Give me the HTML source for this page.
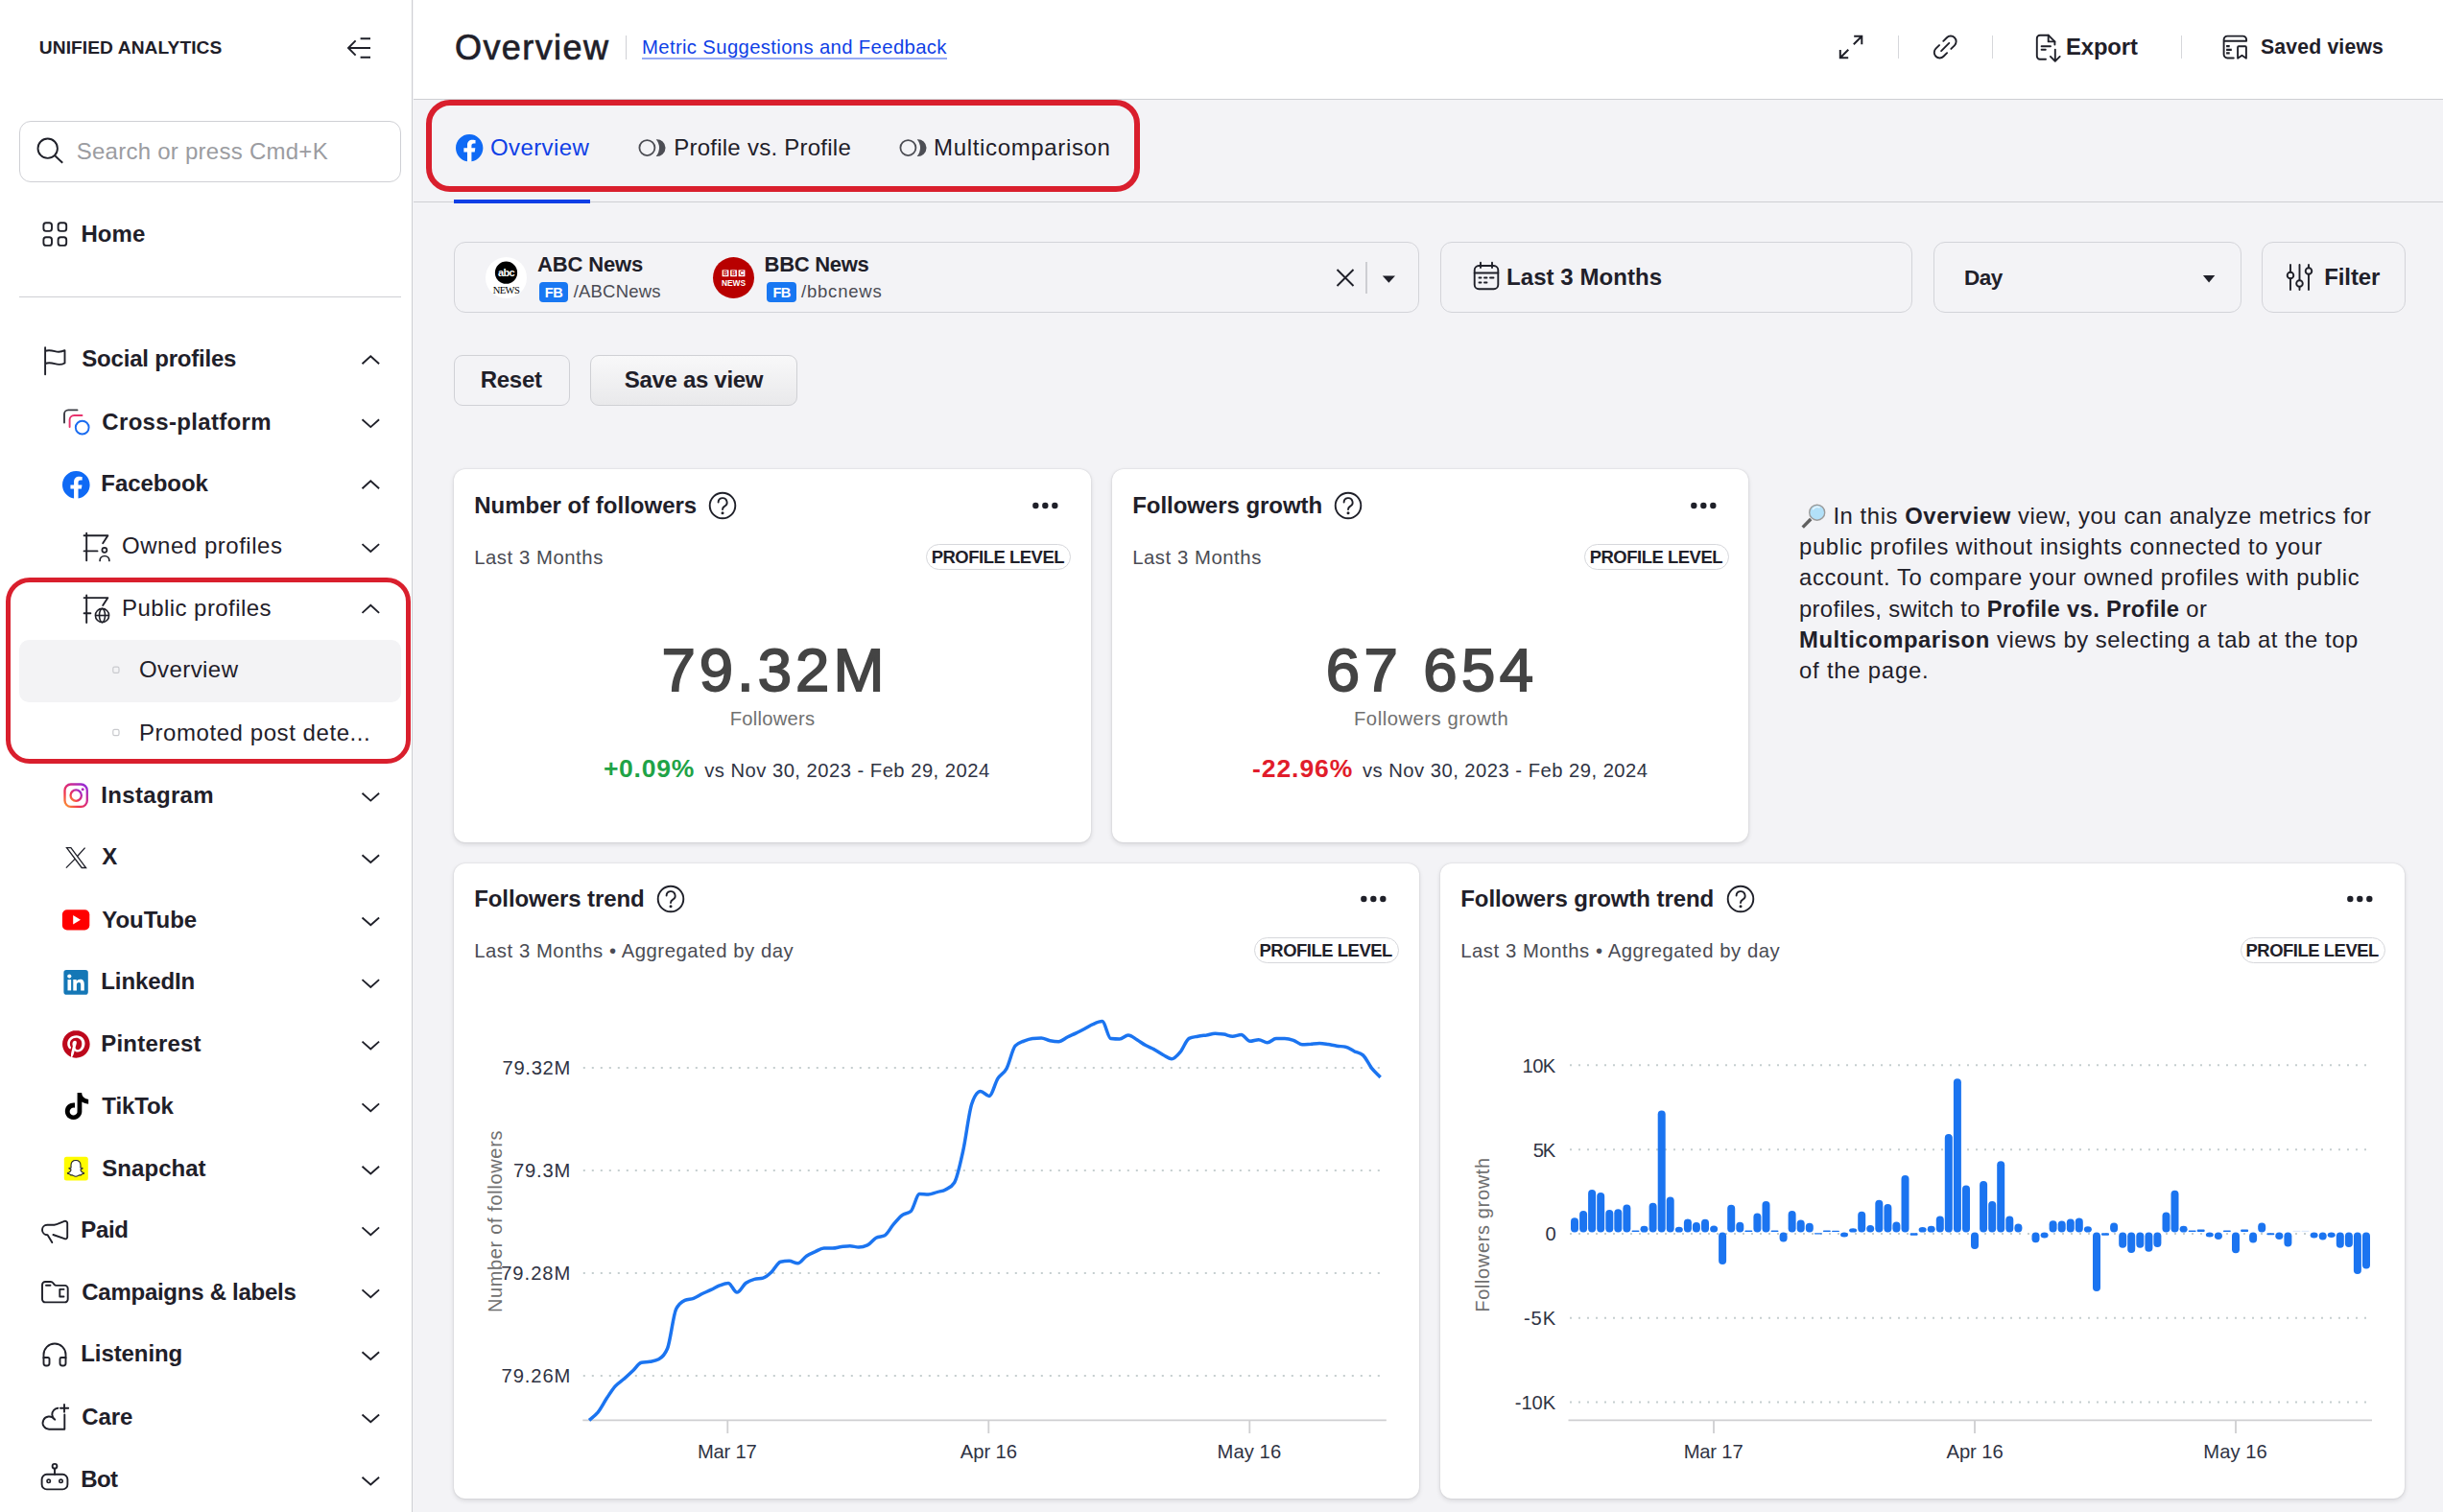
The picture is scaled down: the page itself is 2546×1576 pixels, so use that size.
<!DOCTYPE html>
<html lang="en">
<head>
<meta charset="utf-8">
<title>Unified Analytics – Overview</title>
<style>
html,body{margin:0;padding:0}
body{width:2546px;height:1576px;overflow:hidden;position:relative;background:#f3f3f6;font-family:"Liberation Sans",Arial,sans-serif;color:#1f2029}
.a{position:absolute;box-sizing:border-box}
.t{position:absolute;white-space:nowrap;line-height:1;margin:0;font-weight:400}
.t b{font-weight:700}
svg{overflow:visible}
.card{background:#fff;border-radius:12px;box-shadow:0 2px 5px rgba(20,22,30,.13),0 0 2px rgba(20,22,30,.14)}
.badge{border:1.5px solid #d6d7db;border-radius:14px;background:#fff}
.fld{border:1.5px solid #d3d4d9;border-radius:12px}
</style>
</head>
<body>
<nav>
<div class="a " style="left:0px;top:0px;width:430.2px;height:1576px;background:#fff;border-right:1.6px solid #cecfd3"></div>
<span class="t" style="left:40.8px;top:40.0px;font-size:19.2px;letter-spacing:0.07px;font-weight:700;">UNIFIED ANALYTICS</span>
<svg class="a" style="left:360px;top:36px" width="28" height="28" viewBox="360 36 28 28" ><path d="M386 40.2H375.6M386 50H363.4M386 59.8H375.6M370.6 42.4L363 50l7.6 7.6" fill="none" stroke="#1f2029" stroke-width="1.9"/></svg>
<div class="a " style="left:20px;top:126px;width:398px;height:63.5px;border:1.5px solid #cfd0d5;border-radius:12px;background:#fff"></div>
<svg class="a" style="left:36px;top:140px" width="34" height="34" viewBox="36 140 34 34" ><circle cx="49.7" cy="154.7" r="10.2" fill="none" stroke="#1f2029" stroke-width="1.9"/><path d="M57.2 162.2L65.2 169.8" stroke="#1f2029" stroke-width="1.9" fill="none"/></svg>
<span class="t" style="left:79.7px;top:146.0px;font-size:24px;letter-spacing:0.26px;color:#9b9ca1;">Search or press Cmd+K</span>
<svg class="a" style="left:42px;top:229px" width="30" height="30" viewBox="42 229 30 30" ><g fill="none" stroke="#1f2029" stroke-width="1.9"><rect x="45.4" y="232.3" width="8.6" height="8.6" rx="2.6"/><rect x="60.6" y="232.3" width="8.6" height="8.6" rx="2.6"/><rect x="45.4" y="247.3" width="8.6" height="8.6" rx="2.6"/><rect x="60.6" y="247.3" width="8.6" height="8.6" rx="2.6"/></g></svg>
<span class="t" style="left:84.4px;top:232.0px;font-size:24px;letter-spacing:0.09px;font-weight:700;">Home</span>
<div class="a " style="left:20px;top:308.6px;width:398px;height:1.8px;background:#cfd0d4"></div>
<div class="a " style="left:20px;top:667.4px;width:398px;height:64.5px;background:#f3f3f5;border-radius:10px"></div>
<span class="t" style="left:85.3px;top:362.0px;font-size:24px;letter-spacing:-0.21px;font-weight:700;">Social profiles</span>
<svg class="a" style="left:0;top:0" width="430" height="1576"><path d="M377.5 379.2L386.3 371.2L395.1 379.2" fill="none" stroke="#1f2029" stroke-width="1.9"/></svg>
<span class="t" style="left:106.3px;top:428.0px;font-size:24px;letter-spacing:0.33px;font-weight:700;">Cross-platform</span>
<svg class="a" style="left:0;top:0" width="430" height="1576"><path d="M377.5 437.3L386.3 445.1L395.1 437.3" fill="none" stroke="#1f2029" stroke-width="1.9"/></svg>
<span class="t" style="left:105.3px;top:492.0px;font-size:24px;letter-spacing:-0.07px;font-weight:700;">Facebook</span>
<svg class="a" style="left:0;top:0" width="430" height="1576"><path d="M377.5 509.3L386.3 501.3L395.1 509.3" fill="none" stroke="#1f2029" stroke-width="1.9"/></svg>
<span class="t" style="left:127.0px;top:557.0px;font-size:24px;letter-spacing:0.53px;">Owned profiles</span>
<svg class="a" style="left:0;top:0" width="430" height="1576"><path d="M377.5 567.1L386.3 574.9L395.1 567.1" fill="none" stroke="#1f2029" stroke-width="1.9"/></svg>
<span class="t" style="left:127.0px;top:622.0px;font-size:24px;letter-spacing:0.44px;">Public profiles</span>
<svg class="a" style="left:0;top:0" width="430" height="1576"><path d="M377.5 638.9L386.3 630.9L395.1 638.9" fill="none" stroke="#1f2029" stroke-width="1.9"/></svg>
<span class="t" style="left:145.0px;top:686.0px;font-size:24px;letter-spacing:0.42px;">Overview</span>
<span class="t" style="left:145.0px;top:752.0px;font-size:24px;letter-spacing:0.56px;">Promoted post dete...</span>
<span class="t" style="left:105.3px;top:817.0px;font-size:24px;letter-spacing:0.33px;font-weight:700;">Instagram</span>
<svg class="a" style="left:0;top:0" width="430" height="1576"><path d="M377.5 826.8L386.3 834.6L395.1 826.8" fill="none" stroke="#1f2029" stroke-width="1.9"/></svg>
<span class="t" style="left:106.3px;top:881.0px;font-size:24px;letter-spacing:-0.10px;font-weight:700;">X</span>
<svg class="a" style="left:0;top:0" width="430" height="1576"><path d="M377.5 891.2L386.3 899.0L395.1 891.2" fill="none" stroke="#1f2029" stroke-width="1.9"/></svg>
<span class="t" style="left:106.3px;top:947.0px;font-size:24px;letter-spacing:-0.04px;font-weight:700;">YouTube</span>
<svg class="a" style="left:0;top:0" width="430" height="1576"><path d="M377.5 956.5L386.3 964.3L395.1 956.5" fill="none" stroke="#1f2029" stroke-width="1.9"/></svg>
<span class="t" style="left:105.3px;top:1011.0px;font-size:24px;letter-spacing:-0.12px;font-weight:700;">LinkedIn</span>
<svg class="a" style="left:0;top:0" width="430" height="1576"><path d="M377.5 1021.1L386.3 1028.9L395.1 1021.1" fill="none" stroke="#1f2029" stroke-width="1.9"/></svg>
<span class="t" style="left:105.3px;top:1076.0px;font-size:24px;letter-spacing:0.19px;font-weight:700;">Pinterest</span>
<svg class="a" style="left:0;top:0" width="430" height="1576"><path d="M377.5 1085.6L386.3 1093.4L395.1 1085.6" fill="none" stroke="#1f2029" stroke-width="1.9"/></svg>
<span class="t" style="left:106.3px;top:1141.0px;font-size:24px;letter-spacing:-0.10px;font-weight:700;">TikTok</span>
<svg class="a" style="left:0;top:0" width="430" height="1576"><path d="M377.5 1150.4L386.3 1158.2L395.1 1150.4" fill="none" stroke="#1f2029" stroke-width="1.9"/></svg>
<span class="t" style="left:106.3px;top:1206.0px;font-size:24px;letter-spacing:0.04px;font-weight:700;">Snapchat</span>
<svg class="a" style="left:0;top:0" width="430" height="1576"><path d="M377.5 1215.7L386.3 1223.5L395.1 1215.7" fill="none" stroke="#1f2029" stroke-width="1.9"/></svg>
<span class="t" style="left:84.3px;top:1270.0px;font-size:24px;letter-spacing:-0.34px;font-weight:700;">Paid</span>
<svg class="a" style="left:0;top:0" width="430" height="1576"><path d="M377.5 1279.4L386.3 1287.2L395.1 1279.4" fill="none" stroke="#1f2029" stroke-width="1.9"/></svg>
<span class="t" style="left:85.3px;top:1335.0px;font-size:24px;letter-spacing:-0.27px;font-weight:700;">Campaigns &amp; labels</span>
<svg class="a" style="left:0;top:0" width="430" height="1576"><path d="M377.5 1344.4L386.3 1352.2L395.1 1344.4" fill="none" stroke="#1f2029" stroke-width="1.9"/></svg>
<span class="t" style="left:84.3px;top:1399.0px;font-size:24px;letter-spacing:-0.09px;font-weight:700;">Listening</span>
<svg class="a" style="left:0;top:0" width="430" height="1576"><path d="M377.5 1409.2L386.3 1417.0L395.1 1409.2" fill="none" stroke="#1f2029" stroke-width="1.9"/></svg>
<span class="t" style="left:85.3px;top:1465.0px;font-size:24px;letter-spacing:-0.07px;font-weight:700;">Care</span>
<svg class="a" style="left:0;top:0" width="430" height="1576"><path d="M377.5 1474.5L386.3 1482.3L395.1 1474.5" fill="none" stroke="#1f2029" stroke-width="1.9"/></svg>
<span class="t" style="left:84.3px;top:1530.0px;font-size:24px;letter-spacing:-0.65px;font-weight:700;">Bot</span>
<svg class="a" style="left:0;top:0" width="430" height="1576"><path d="M377.5 1539.7L386.3 1547.5L395.1 1539.7" fill="none" stroke="#1f2029" stroke-width="1.9"/></svg>
<svg class="a" style="left:0;top:0" width="430" height="1576" viewBox="0 0 430 1576"><path fill="none" stroke="#1f2029" stroke-width="1.9" stroke-linecap="round" stroke-linejoin="round" d="M47.100 362.2V390.3M47.100 365.9c3.400-1.300 6.500-.700 10 .300s7 .800 10.400-1v13.300c-3.400 1.800-6.900 1.700-10.400.700s-6.600-1.500-10-.200"/></svg>
<svg class="a" style="left:0;top:0" width="430" height="1576" viewBox="0 0 430 1576"><path d="M67 440.6V431.6a4.200 4.200 0 0 1 4.200-4.200H80.500" fill="none" stroke="#3b3c44" stroke-width="1.9" stroke-linecap="round"/><path d="M72.600 445.1V437.6a4.600 4.600 0 0 1 4.600-4.600H85.500" fill="none" stroke="#e8336d" stroke-width="1.9" stroke-linecap="round"/><circle cx="85.700" cy="445.6" r="6.900" fill="none" stroke="#1a6cf0" stroke-width="1.9"/></svg>
<svg class="a" style="left:65.1px;top:490.6px" width="28.6" height="28.6" viewBox="0 0 24 24" ><circle cx="12" cy="12" r="11.5" fill="#fff"/><path d="M24 12.073c0-6.627-5.373-12-12-12s-12 5.373-12 12c0 5.99 4.388 10.954 10.125 11.854v-8.385H7.078v-3.47h3.047V9.43c0-3.007 1.792-4.669 4.533-4.669 1.312 0 2.686.235 2.686.235v2.953H15.83c-1.491 0-1.956.925-1.956 1.874v2.25h3.328l-.532 3.47h-2.796v8.385C19.612 23.027 24 18.062 24 12.073z" fill="#0f6af5"/></svg>
<svg class="a" style="left:0;top:0" width="430" height="1576" viewBox="0 0 430 1576"><path fill="none" stroke="#1f2029" stroke-width="1.9" stroke-linecap="round" stroke-linejoin="round" d="M90.200 555.7V584.3M87.600 558.3H112.400L107.200 566.2M87.600 574.4H101.500"/><circle cx="108.900" cy="573.3" r="2.500" fill="none" stroke="#1f2029" stroke-width="1.700"/><path d="M104.100 584.4a4.900 4.900 0 0 1 9.800 0" fill="none" stroke="#1f2029" stroke-width="1.700" stroke-linecap="round"/></svg>
<svg class="a" style="left:0;top:0" width="430" height="1576" viewBox="0 0 430 1576"><path fill="none" stroke="#1f2029" stroke-width="1.9" stroke-linecap="round" stroke-linejoin="round" d="M90.200 620.5V649.1M87.600 623.1H112.400L107.200 631.0M87.600 639.2H94.400"/><g fill="none" stroke="#1f2029" stroke-width="1.600"><circle cx="106.500" cy="641.5" r="7.100"/><ellipse cx="106.500" cy="641.5" rx="3" ry="7.100"/><path d="M99.400 641.5H113.600"/></g></svg>
<svg class="a" style="left:0;top:0" width="430" height="1576" viewBox="0 0 430 1576"><rect x="117.800" y="695.2" width="6.200" height="6.200" rx="1.600" fill="none" stroke="#c9cace" stroke-width="1.200"/></svg>
<svg class="a" style="left:0;top:0" width="430" height="1576" viewBox="0 0 430 1576"><rect x="117.800" y="760.4" width="6.200" height="6.200" rx="1.600" fill="none" stroke="#c9cace" stroke-width="1.200"/></svg>
<svg class="a" style="left:0;top:0" width="430" height="1576" viewBox="0 0 430 1576"><defs><linearGradient id="ig" x1="0" y1="1" x2="1" y2="0"><stop offset="0" stop-color="#fd9a2e"/><stop offset=".3" stop-color="#f0364f"/><stop offset=".6" stop-color="#d22a8a"/><stop offset="1" stop-color="#8a2be2"/></linearGradient></defs><g fill="none" stroke="url(#ig)" stroke-width="2.300"><rect x="67.500" y="817.5" width="23.300" height="23.300" rx="6.300"/><circle cx="79.200" cy="829.1" r="5.700"/></g><circle cx="86.200" cy="822.7" r="1.500" fill="#b52ac0"/></svg>
<svg class="a" style="left:0;top:0" width="430" height="1576" viewBox="0 0 430 1576"><g fill="none" stroke="#1f2029" stroke-width="1.300" stroke-linejoin="miter"><path d="M69.500 883.7H73.900L89.600 904.5H85.200Z"/><path d="M88.600 883.6L80.400 892.7M78 895.4L68.900 904.6"/></g></svg>
<svg class="a" style="left:0;top:0" width="430" height="1576" viewBox="0 0 430 1576"><rect x="64.900" y="948.3" width="28.400" height="21.100" rx="5" fill="#ff0000"/><path d="M76.200 954.0L84 958.8L76.200 963.6Z" fill="#fff"/></svg>
<svg class="a" style="left:0;top:0" width="430" height="1576" viewBox="0 0 430 1576"><rect x="66.400" y="1011.1" width="25.400" height="25.600" rx="2.800" fill="#1477b6"/><g fill="#fff"><circle cx="72.300" cy="1017.6" r="2.100"/><rect x="70.500" y="1021.1" width="3.600" height="11.300"/><path d="M76.300 1021.1h3.400v1.600c.800-1.300 2.100-2 3.800-2 3.300 0 4.300 2 4.300 5.200V1032.4h-3.600V1026.7c0-1.500-.3-2.700-1.900-2.700-1.700 0-2.400 1.100-2.400 2.700V1032.4h-3.600z"/></g></svg>
<svg class="a" style="left:65px;top:1073.6px" width="28.700" height="28.700" viewBox="0 0 24 24"><circle cx="12" cy="12" r="11.500" fill="#fff"/><path fill="#bd081c" d="M12.017 0C5.396 0 .029 5.367.029 11.987c0 5.079 3.158 9.417 7.618 11.162-.105-.949-.199-2.403.041-3.439.219-.937 1.406-5.957 1.406-5.957s-.359-.72-.359-1.781c0-1.663.967-2.911 2.168-2.911 1.024 0 1.518.769 1.518 1.688 0 1.029-.653 2.567-.992 3.992-.285 1.193.6 2.165 1.775 2.165 2.128 0 3.768-2.245 3.768-5.487 0-2.861-2.063-4.869-5.008-4.869-3.410 0-5.409 2.562-5.409 5.199 0 1.033.394 2.143.889 2.741.099.120.112.225.085.345-.090.375-.293 1.199-.334 1.363-.053.225-.172.271-.401.165-1.495-.690-2.433-2.878-2.433-4.646 0-3.776 2.748-7.252 7.920-7.252 4.158 0 7.392 2.967 7.392 6.923 0 4.135-2.607 7.462-6.233 7.462-1.214 0-2.354-.629-2.758-1.379l-.749 2.848c-.269 1.045-1.004 2.352-1.498 3.146 1.123.345 2.306.535 3.550.535 6.607 0 11.985-5.365 11.985-11.987C23.970 5.390 18.592.026 11.985.026L12.017 0z"/></svg>
<svg class="a" style="left:65.500px;top:1138.7px" width="28" height="28" viewBox="0 0 24 24"><path fill="#000" d="M12.525.020c1.310-.020 2.610-.010 3.910-.020.080 1.530.630 3.090 1.750 4.170 1.120 1.110 2.700 1.620 4.240 1.790v4.030c-1.440-.050-2.890-.350-4.200-.970-.570-.260-1.100-.590-1.620-.930-.010 2.920.010 5.840-.020 8.750-.080 1.400-.540 2.790-1.350 3.940-1.310 1.920-3.580 3.170-5.910 3.210-1.430.080-2.860-.310-4.080-1.030-2.020-1.190-3.440-3.370-3.650-5.710-.020-.500-.030-1-.010-1.490.180-1.900 1.120-3.720 2.580-4.960 1.660-1.440 3.980-2.130 6.150-1.720.020 1.480-.040 2.960-.040 4.440-.990-.320-2.150-.230-3.020.370-.630.410-1.110 1.040-1.360 1.750-.210.510-.150 1.070-.140 1.610.240 1.640 1.820 3.020 3.500 2.870 1.120-.010 2.190-.660 2.770-1.610.190-.330.400-.670.410-1.060.100-1.790.060-3.570.070-5.360.010-4.030-.010-8.050.020-12.070z"/></svg>
<svg class="a" style="left:0;top:0" width="430" height="1576" viewBox="0 0 430 1576"><rect x="66.800" y="1205.8" width="25" height="24.800" rx="2.500" fill="#fffc00"/><path d="M79 1209.5c3.200 0 5 2.300 5 5.200 0 1-.1 1.900-.1 2.400.400.300 1 .1 1.500.1.600 0 .900.500.500.900-.600.500-1.500.600-1.900 1.100-.3.400 1 2.800 3.300 3.300.400.100.400.500.1.700-.700.400-1.700.500-2.300.700-.3.100-.2.700-.500.900-.400.200-1.200-.1-2 .1-.900.200-1.700 1.300-3.600 1.300s-2.700-1.100-3.600-1.300c-.800-.2-1.600.1-2-.1-.3-.2-.2-.800-.500-.900-.600-.2-1.600-.3-2.300-.700-.3-.2-.3-.600.1-.700 2.300-.500 3.600-2.900 3.300-3.300-.400-.500-1.300-.600-1.900-1.100-.400-.400-.1-.900.500-.900.500 0 1.100.2 1.500-.1 0-.500-.1-1.400-.1-2.400 0-2.900 1.800-5.200 5-5.200z" fill="#fff" stroke="#1f2029" stroke-width="1.100" stroke-linejoin="round"/></svg>
<svg class="a" style="left:0;top:0" width="430" height="1576" viewBox="0 0 430 1576"><path fill="none" stroke="#1f2029" stroke-width="1.9" stroke-linecap="round" stroke-linejoin="round" d="M55.400 1287.0L67.300 1291.2c1.500.500 2.900-.500 2.900-2V1275.0c0-1.600-1.500-2.600-3-2.100C63 1274.4 59.500 1276.5 56.500 1276.8H49.200c-3.200 0-5.200 2.300-5.200 5.100s2.300 5.100 5.600 5.400l4.700 7.800"/></svg>
<svg class="a" style="left:0;top:0" width="430" height="1576" viewBox="0 0 430 1576"><path fill="none" stroke="#1f2029" stroke-width="1.9" stroke-linecap="round" stroke-linejoin="round" d="M44 1339.2a3.200 3.200 0 0 1 3.200-3.200h5.600c1 0 1.900.500 2.500 1.300l1 1.300c.600.800 1.500 1.300 2.500 1.300H67.500a3.200 3.200 0 0 1 3.200 3.200V1354.2a3.200 3.200 0 0 1-3.200 3.200H47.200a3.200 3.200 0 0 1-3.200-3.200z"/><path fill="none" stroke="#1f2029" stroke-width="1.9" stroke-linecap="round" stroke-linejoin="round" d="M48 1339.7H52.500M66.500 1343.9H62.300V1351.5H66.500"/></svg>
<svg class="a" style="left:0;top:0" width="430" height="1576" viewBox="0 0 430 1576"><path fill="none" stroke="#1f2029" stroke-width="1.9" stroke-linecap="round" stroke-linejoin="round" d="M45.500 1415.5V1412.0a11.500 11.500 0 0 1 23 0V1415.5"/><path fill="none" stroke="#1f2029" stroke-width="1.9" stroke-linecap="round" stroke-linejoin="round" d="M45.500 1415.0H50a1.500 1.500 0 0 1 1.500 1.500V1421.0a2.500 2.500 0 0 1-2.500 2.500H48a2.500 2.500 0 0 1-2.500-2.500zM68.500 1415.0H64a1.500 1.500 0 0 0-1.500 1.500V1421.0a2.500 2.500 0 0 0 2.500 2.500H66a2.500 2.500 0 0 0 2.500-2.500z"/></svg>
<svg class="a" style="left:0;top:0" width="430" height="1576" viewBox="0 0 430 1576"><path fill="none" stroke="#1f2029" stroke-width="1.9" stroke-linecap="round" stroke-linejoin="round" d="M67 1463.9V1471.8M63 1467.8H71.200M67.300 1474.4V1489.7H51.600A6.600 6.600 0 1 1 56.500 1479.2M57.300 1479.7C55.500 1478.0 54.300 1476.2 54.300 1474.4A6.700 6.700 0 0 1 60.400 1467.7"/></svg>
<svg class="a" style="left:0;top:0" width="430" height="1576" viewBox="0 0 430 1576"><g fill="none" stroke="#1f2029" stroke-width="1.9" stroke-linecap="round" stroke-linejoin="round"><rect x="43.600" y="1536.8" width="26.800" height="15.600" rx="5.200"/><path d="M57 1536.8V1530.7"/><circle cx="57" cy="1528.3" r="2.400"/><circle cx="50.700" cy="1543.8" r="1.700" stroke-width="1.600"/><circle cx="63.500" cy="1543.8" r="1.700" stroke-width="1.600"/></g></svg>
</nav>
<header>
<div class="a " style="left:431px;top:0px;width:2115px;height:104.2px;background:#fff;border-bottom:1.5px solid #cecfd3"></div>
<h1 class="t" style="left:474.0px;top:32.0px;font-size:36px;letter-spacing:1.42px;-webkit-text-stroke:0.7px #1f2029;">Overview</h1>
<div class="a " style="left:651.6px;top:37.2px;width:1.4px;height:24.4px;background:#d0d1d5"></div>
<a class="t" style="left:669.0px;top:39.0px;font-size:20.3px;letter-spacing:0.36px;color:#0f3fe6;border-bottom:2px solid #98abf4;padding-bottom:1.2px;">Metric Suggestions and Feedback</a>
<svg class="a" style="left:1912px;top:32px" width="34" height="34" viewBox="1912 32 34 34" ><path fill="none" stroke="#1f2029" stroke-width="2" stroke-linecap="butt" stroke-linejoin="miter" d="M1917.8 60.3L1926.3 51.8M1917.8 52V60.3H1926.2M1940.3 37.8L1931.800 46.300M1932.2 37.8H1940.3V46.2"/></svg>
<div class="a " style="left:1978px;top:37px;width:1.3px;height:24px;background:#d6d7db"></div>
<svg class="a" style="left:2010px;top:32px" width="34" height="34" viewBox="2010 32 34 34" ><g fill="none" stroke="#1f2029" stroke-width="1.9" stroke-linecap="round" stroke-linejoin="round" transform="translate(2027.2 49) rotate(-45)"><path d="M3 -5.7H8.1A5.7 5.7 0 0 1 8.1 5.7H3"/><path d="M-3 5.7H-8.1A5.7 5.7 0 0 1 -8.1 -5.7H-3"/><path d="M-5.8 0H5.8"/></g></svg>
<div class="a " style="left:2076px;top:37px;width:1.3px;height:24px;background:#d6d7db"></div>
<svg class="a" style="left:2118px;top:32px" width="34" height="36" viewBox="2118 32 34 36" ><g fill="none" stroke="#1f2029" stroke-width="1.9" stroke-linecap="round" stroke-linejoin="round"><path d="M2132 61.800H2126a3.200 3.200 0 0 1-3.200-3.200V39.900a3.200 3.200 0 0 1 3.200-3.200H2134.700l6.700 6.700V46.600"/><path d="M2134.700 36.700V43.400H2141.400"/><path d="M2127.600 48.200H2137M2127.600 51.700H2131.800"/><path d="M2141.800 51.600V63.200M2136.900 58.900L2141.800 63.800L2146.700 58.900"/></g></svg>
<span class="t" style="left:2153.0px;top:37.0px;font-size:23.8px;letter-spacing:-0.09px;font-weight:700;">Export</span>
<div class="a " style="left:2273px;top:37px;width:1.3px;height:24px;background:#d6d7db"></div>
<svg class="a" style="left:2314px;top:34px" width="30" height="30" viewBox="2314 34 30 30" ><g fill="none" stroke="#1f2029" stroke-width="1.9" stroke-linecap="round" stroke-linejoin="round"><path d="M2327.800 60.500H2321.300a3.700 3.700 0 0 1-3.700-3.700V41.300a3.700 3.700 0 0 1 3.700-3.700H2337.400a3.700 3.700 0 0 1 3.700 3.700V42.800H2317.600"/><path stroke-width="2.300" stroke-linecap="butt" d="M2320.100 48.200H2323.700M2320.100 51.800H2325.800M2320.100 55.400H2323.700"/><path d="M2332.100 60.700V49.200a1 1 0 0 1 1-1H2339.900a1 1 0 0 1 1 1V60.700L2336.500 57.700Z"/></g></svg>
<span class="t" style="left:2356.0px;top:38.0px;font-size:21.2px;letter-spacing:0.18px;font-weight:700;">Saved views</span>
</header>
<main>
<div class="a " style="left:431px;top:209.6px;width:2115px;height:1.8px;background:#cecfd3"></div>
<div class="a " style="left:473px;top:208.4px;width:142px;height:3.9px;background:#0f3fe6"></div>
<svg class="a" style="left:474.9px;top:139.8px" width="28.4" height="28.4" viewBox="0 0 24 24" ><circle cx="12" cy="12" r="11.5" fill="#fff"/><path d="M24 12.073c0-6.627-5.373-12-12-12s-12 5.373-12 12c0 5.99 4.388 10.954 10.125 11.854v-8.385H7.078v-3.47h3.047V9.43c0-3.007 1.792-4.669 4.533-4.669 1.312 0 2.686.235 2.686.235v2.953H15.83c-1.491 0-1.956.925-1.956 1.874v2.25h3.328l-.532 3.47h-2.796v8.385C19.612 23.027 24 18.062 24 12.073z" fill="#0f6af5"/></svg>
<span class="t" style="left:510.9px;top:142.0px;font-size:24px;letter-spacing:0.42px;color:#0f3fe6;">Overview</span>
<svg class="a" style="left:664.4px;top:143px" width="32" height="22" viewBox="664.4 143 32 22" ><circle cx="674.8" cy="154.05" r="8" fill="none" stroke="#4c4d54" stroke-width="1.8"/><path d="M684.1 145.2A8.9 8.9 0 1 1 684.1 162.9A13.5 13.5 0 0 0 684.1 145.2Z" fill="#4c4d54"/></svg>
<span class="t" style="left:702.2px;top:142.0px;font-size:24px;letter-spacing:0.25px;">Profile vs. Profile</span>
<svg class="a" style="left:936px;top:143px" width="32" height="22" viewBox="936 143 32 22" ><circle cx="946.4" cy="154.05" r="8" fill="none" stroke="#4c4d54" stroke-width="1.8"/><path d="M955.7 145.2A8.9 8.9 0 1 1 955.7 162.9A13.5 13.5 0 0 0 955.7 145.2Z" fill="#4c4d54"/></svg>
<span class="t" style="left:973.0px;top:142.0px;font-size:24px;letter-spacing:0.66px;">Multicomparison</span>
<div class="a " style="left:444px;top:104px;width:744px;height:95.8px;border:6.2px solid #d91f2d;border-radius:25px"></div>
<div class="a " style="left:6.3px;top:602px;width:421.7px;height:193.8px;border:5.8px solid #d91f2d;border-radius:25px"></div>
<div class="a fld" style="left:473.4px;top:252.4px;width:1005.2px;height:74px;"></div>
<svg class="a" style="left:506px;top:267.5px" width="43" height="43" viewBox="0 0 43 43"><circle cx="21.5" cy="21.5" r="21.5" fill="#fff"/><circle cx="21.5" cy="16.2" r="11.6" fill="#000"/><text x="21.5" y="19.6" text-anchor="middle" font-family="Liberation Sans,Arial,sans-serif" font-weight="700" font-size="11" fill="#fff" letter-spacing="-0.6">abc</text><text x="21.5" y="37.6" text-anchor="middle" font-family="Liberation Serif,serif" font-size="10.5" fill="#000" letter-spacing="-0.5">NEWS</text></svg>
<span class="t" style="left:560.0px;top:265.0px;font-size:22px;letter-spacing:-0.14px;font-weight:700;">ABC News</span>
<div class="a " style="left:561.6px;top:294px;width:30.4px;height:21px;background:#1877f2;border-radius:4px"></div>
<span class="t" style="left:567.8px;top:298.0px;font-size:14.6px;letter-spacing:-0.51px;font-weight:700;color:#fff;">FB</span>
<span class="t" style="left:597.7px;top:295.0px;font-size:18.5px;letter-spacing:0.19px;color:#4a4b53;">/ABCNews</span>
<svg class="a" style="left:743px;top:267.5px" width="43" height="43" viewBox="0 0 43 43"><circle cx="21.5" cy="21.5" r="21.5" fill="#b80000"/><g fill="#fff"><rect x="9.6" y="13.4" width="6.8" height="6.8"/><rect x="18.1" y="13.4" width="6.8" height="6.8"/><rect x="26.6" y="13.4" width="6.8" height="6.8"/></g><text x="21.5" y="29.6" text-anchor="middle" font-family="Liberation Sans,Arial,sans-serif" font-weight="700" font-size="8.4" fill="#fff">NEWS</text><text font-family="Liberation Sans,Arial,sans-serif" font-weight="700" font-size="6.4" fill="#b80000"><tspan x="10.8" y="19.2">B</tspan><tspan x="19.3" y="19.2">B</tspan><tspan x="27.7" y="19.2">C</tspan></text></svg>
<span class="t" style="left:796.6px;top:265.0px;font-size:22px;letter-spacing:-0.29px;font-weight:700;">BBC News</span>
<div class="a " style="left:799.2px;top:294px;width:30.4px;height:21px;background:#1877f2;border-radius:4px"></div>
<span class="t" style="left:805.4px;top:298.0px;font-size:14.6px;letter-spacing:-0.51px;font-weight:700;color:#fff;">FB</span>
<span class="t" style="left:835.0px;top:295.0px;font-size:18.5px;letter-spacing:0.80px;color:#4a4b53;">/bbcnews</span>
<svg class="a" style="left:1390px;top:277px" width="24" height="24" viewBox="1390 277 24 24" ><path d="M1393.5 281L1410.5 298M1410.5 281L1393.5 298" stroke="#1f2029" stroke-width="1.9" fill="none"/></svg>
<div class="a " style="left:1423.3px;top:272.6px;width:1.4px;height:33.2px;background:#cdced2"></div>
<svg class="a" style="left:1440px;top:286px" width="16" height="10" viewBox="1440 286 16 10" ><path d="M1440.8 287.5H1454L1447.4 294.7Z" fill="#1f2029"/></svg>
<div class="a fld" style="left:1501.2px;top:252.4px;width:491.8px;height:74px;"></div>
<svg class="a" style="left:1533px;top:271px" width="32" height="33" viewBox="1533 271 32 33" ><g fill="none" stroke="#1f2029" stroke-width="1.9" stroke-linecap="round" stroke-linejoin="round"><rect x="1536.700" y="277" width="24.600" height="24.200" rx="4.500"/><path d="M1536.700 284.500H1561.300M1543 273.800V279M1555 273.800V279"/><path d="M1541.500 289.500H1543.500M1547 289.500H1549.500M1553 289.500H1556.500M1541.500 294.500H1543.500M1547 294.500H1549.500"/></g></svg>
<span class="t" style="left:1570.0px;top:277.0px;font-size:24px;letter-spacing:0.06px;font-weight:700;">Last 3 Months</span>
<div class="a fld" style="left:2015.1px;top:252.4px;width:320.7px;height:74px;"></div>
<span class="t" style="left:2047.0px;top:279.0px;font-size:22.5px;letter-spacing:-0.48px;font-weight:700;">Day</span>
<svg class="a" style="left:2295px;top:286px" width="16" height="10" viewBox="2295 286 16 10" ><path d="M2295.9 286.9H2308.3L2302.1 294.6Z" fill="#1f2029"/></svg>
<div class="a fld" style="left:2357.2px;top:252.4px;width:149.6px;height:74px;"></div>
<svg class="a" style="left:2380px;top:273px" width="32" height="32" viewBox="2380 273 32 32" ><g fill="none" stroke="#1f2029" stroke-width="1.9" stroke-linecap="round" stroke-linejoin="round"><path d="M2387 276V283.500M2387 290.500V302M2396.500 276V292M2396.500 299V302M2406 276V279M2406 286V302"/><circle cx="2387" cy="287" r="3.300"/><circle cx="2396.500" cy="295.500" r="3.300"/><circle cx="2406" cy="282.500" r="3.300"/></g></svg>
<span class="t" style="left:2422.3px;top:277.0px;font-size:24px;letter-spacing:-0.13px;font-weight:700;">Filter</span>
<div class="a " style="left:473.4px;top:370.3px;width:120.6px;height:53.2px;border:1.5px solid #d0d1d6;border-radius:9px"></div>
<span class="t" style="left:500.7px;top:384.0px;font-size:24px;letter-spacing:-0.27px;font-weight:700;">Reset</span>
<div class="a " style="left:615.2px;top:370.3px;width:215.8px;height:53.2px;border:1.5px solid #cfd0d4;border-radius:9px;background:linear-gradient(#f8f8f9,#e9e9eb)"></div>
<span class="t" style="left:650.7px;top:384.0px;font-size:24px;letter-spacing:-0.30px;font-weight:700;">Save as view</span>
<div class="a card" style="left:472.9px;top:488.9px;width:664.1px;height:389.3px;"></div>
<h2 class="t" style="left:494.2px;top:515.0px;font-size:24px;font-weight:700;">Number of followers</h2>
<svg class="a" style="left:737.1px;top:511.3px" width="32" height="32" viewBox="737.1 511.3 32 32" ><circle cx="753.1" cy="527.3" r="13.3" fill="none" stroke="#1f2029" stroke-width="1.9"/><path d="M748.7 523.9a4.5 4.5 0 1 1 6.6 4c-1.5.9-2.2 1.700-2.200 3.400" fill="none" stroke="#1f2029" stroke-width="1.9" stroke-linecap="round"/><circle cx="753.1" cy="535.1" r="1.5" fill="#1f2029"/></svg>
<svg class="a" style="left:1076.1px;top:522.3px" width="30" height="10" viewBox="1076.1 522.3 30 10" ><g fill="#1f2029"><circle cx="1079.4" cy="527.3" r="3.2"/><circle cx="1089.4" cy="527.3" r="3.2"/><circle cx="1099.4" cy="527.3" r="3.2"/></g></svg>
<span class="t" style="left:494.2px;top:571.0px;font-size:20.3px;letter-spacing:0.56px;color:#4a4b53;">Last 3 Months</span>
<div class="a badge" style="left:965.2px;top:567.3px;width:150.6px;height:26.6px;"></div>
<span class="t" style="left:970.7px;top:572.0px;font-size:18.4px;letter-spacing:-0.44px;font-weight:700;">PROFILE LEVEL</span>
<span class="t" style="left:689.4px;top:667.0px;font-size:63.5px;letter-spacing:4.02px;color:#444;-webkit-text-stroke:1.8px #444;">79.32M</span>
<span class="t" style="left:760.7px;top:739.0px;font-size:20.2px;letter-spacing:0.25px;color:#707070;">Followers</span>
<span class="t" style="left:628.9px;top:788.0px;font-size:26.5px;letter-spacing:0.75px;font-weight:700;color:#1fa347;">+0.09%</span>
<span class="t" style="left:734.2px;top:793.0px;font-size:20.2px;letter-spacing:0.49px;color:#2f3343;">vs Nov 30, 2023 - Feb 29, 2024</span>
<div class="a card" style="left:1158.9px;top:488.9px;width:663.5px;height:389.3px;"></div>
<h2 class="t" style="left:1180.2px;top:515.0px;font-size:24px;letter-spacing:-0.05px;font-weight:700;">Followers growth</h2>
<svg class="a" style="left:1388.6px;top:511.3px" width="32" height="32" viewBox="1388.6 511.3 32 32" ><circle cx="1404.6" cy="527.3" r="13.3" fill="none" stroke="#1f2029" stroke-width="1.9"/><path d="M1400.2 523.9a4.5 4.5 0 1 1 6.6 4c-1.5.9-2.2 1.700-2.200 3.400" fill="none" stroke="#1f2029" stroke-width="1.9" stroke-linecap="round"/><circle cx="1404.6" cy="535.1" r="1.5" fill="#1f2029"/></svg>
<svg class="a" style="left:1762.1px;top:522.3px" width="30" height="10" viewBox="1762.1 522.3 30 10" ><g fill="#1f2029"><circle cx="1765.4" cy="527.3" r="3.2"/><circle cx="1775.4" cy="527.3" r="3.2"/><circle cx="1785.4" cy="527.3" r="3.2"/></g></svg>
<span class="t" style="left:1180.2px;top:571.0px;font-size:20.3px;letter-spacing:0.56px;color:#4a4b53;">Last 3 Months</span>
<div class="a badge" style="left:1651.2px;top:567.3px;width:150.6px;height:26.6px;"></div>
<span class="t" style="left:1656.7px;top:572.0px;font-size:18.4px;letter-spacing:-0.44px;font-weight:700;">PROFILE LEVEL</span>
<span class="t" style="left:1381.8px;top:667.0px;font-size:63.5px;letter-spacing:4.42px;color:#444;-webkit-text-stroke:1.8px #444;">67 654</span>
<span class="t" style="left:1411.0px;top:739.0px;font-size:20.2px;letter-spacing:0.54px;color:#707070;">Followers growth</span>
<span class="t" style="left:1305.0px;top:788.0px;font-size:26.5px;letter-spacing:0.94px;font-weight:700;color:#e11d2b;">-22.96%</span>
<span class="t" style="left:1420.0px;top:793.0px;font-size:20.2px;letter-spacing:0.49px;color:#2f3343;">vs Nov 30, 2023 - Feb 29, 2024</span>
<p class="t" style="left:1910.4px;top:526.0px;font-size:23.8px;letter-spacing:0.59px;">In this <b>Overview</b> view, you can analyze metrics for</p>
<p class="t" style="left:1875.0px;top:558.0px;font-size:23.8px;letter-spacing:0.70px;">public profiles without insights connected to your</p>
<p class="t" style="left:1875.0px;top:590.0px;font-size:23.8px;letter-spacing:0.65px;">account. To compare your owned profiles with public</p>
<p class="t" style="left:1875.0px;top:623.0px;font-size:23.8px;letter-spacing:0.33px;">profiles, switch to <b>Profile vs. Profile</b> or</p>
<p class="t" style="left:1875.0px;top:655.0px;font-size:23.8px;letter-spacing:0.56px;"><b>Multicomparison</b> views by selecting a tab at the top</p>
<p class="t" style="left:1875.0px;top:687.0px;font-size:23.8px;letter-spacing:0.81px;">of the page.</p>
<svg class="a" style="left:1874px;top:520px" width="32" height="32" viewBox="1874 520 32 32" ><path d="M1887.2 541L1878.7 549.6" stroke="#606060" stroke-width="3.4"/><circle cx="1893.7" cy="534.2" r="8" fill="#b2e0f8" stroke="#9b9b9b" stroke-width="1.4"/><path d="M1889.6 530.6a5.6 5.6 0 0 1 6.4-1.9" stroke="#e8f6fd" stroke-width="1.6" fill="none" stroke-linecap="round"/></svg>
<div class="a card" style="left:472.9px;top:899.8px;width:1006.4px;height:662.5px;"></div>
<h2 class="t" style="left:494.2px;top:925.0px;font-size:24px;letter-spacing:-0.09px;font-weight:700;">Followers trend</h2>
<svg class="a" style="left:683px;top:921.3px" width="32" height="32" viewBox="683 921.3 32 32" ><circle cx="699" cy="937.3" r="13.3" fill="none" stroke="#1f2029" stroke-width="1.9"/><path d="M694.6 933.9a4.5 4.5 0 1 1 6.6 4c-1.5.9-2.2 1.700-2.200 3.400" fill="none" stroke="#1f2029" stroke-width="1.9" stroke-linecap="round"/><circle cx="699" cy="945.1" r="1.5" fill="#1f2029"/></svg>
<svg class="a" style="left:1418.3px;top:932.3px" width="30" height="10" viewBox="1418.3 932.3 30 10" ><g fill="#1f2029"><circle cx="1421.6" cy="937.3" r="3.2"/><circle cx="1431.6" cy="937.3" r="3.2"/><circle cx="1441.6" cy="937.3" r="3.2"/></g></svg>
<span class="t" style="left:494.2px;top:981.0px;font-size:20.3px;letter-spacing:0.55px;color:#4a4b53;">Last 3 Months • Aggregated by day</span>
<div class="a badge" style="left:1307px;top:977.4px;width:150.6px;height:26.6px;"></div>
<span class="t" style="left:1312.5px;top:982.0px;font-size:18.4px;letter-spacing:-0.44px;font-weight:700;">PROFILE LEVEL</span>
<svg class="a" style="left:0;top:0" width="2546" height="1576" viewBox="0 0 2546 1576"><path d="M607.8 1113H1440" stroke="#c5cecf" stroke-width="2" stroke-dasharray="2 7"/><path d="M607.8 1220H1440" stroke="#c5cecf" stroke-width="2" stroke-dasharray="2 7"/><path d="M607.8 1327H1440" stroke="#c5cecf" stroke-width="2" stroke-dasharray="2 7"/><path d="M607.8 1434H1440" stroke="#c5cecf" stroke-width="2" stroke-dasharray="2 7"/><path d="M607.3 1480.4H1444.8M758.3 1480.4V1494M1030.3 1480.4V1494M1302.3 1480.4V1494" stroke="#cfcfd1" stroke-width="1.8" fill="none"/><path d="M614.0 1480.4C617.0 1477.7 620.0 1475.9 623.1 1472.2C626.1 1468.4 629.1 1462.4 632.1 1457.8C635.1 1453.3 638.2 1448.3 641.2 1444.9C644.2 1441.5 647.2 1440.0 650.2 1437.3C653.3 1434.7 656.3 1432.0 659.3 1429.1C662.3 1426.3 665.3 1421.0 668.4 1420.3C671.4 1419.6 674.4 1419.9 677.4 1419.3C680.5 1418.7 683.5 1418.5 686.5 1416.8C689.5 1415.2 692.5 1413.1 695.6 1405.5C698.6 1398.0 701.6 1370.7 704.6 1364.5C707.6 1358.4 710.7 1356.7 713.7 1355.3C716.7 1353.9 719.7 1354.4 722.7 1353.3C725.8 1352.1 728.8 1350.0 731.8 1348.5C734.8 1347.1 737.8 1345.9 740.9 1344.4C743.9 1343.0 746.9 1341.1 749.9 1339.9C752.9 1338.8 756.0 1337.5 759.0 1337.5C762.0 1337.5 765.0 1347.1 768.0 1347.1C771.1 1347.1 774.1 1339.8 777.1 1337.5C780.1 1335.2 783.1 1334.2 786.2 1333.4C789.2 1332.6 792.2 1333.0 795.2 1332.1C798.3 1331.3 801.3 1328.4 804.3 1325.6C807.3 1322.8 810.3 1316.0 813.4 1315.3C816.4 1314.6 819.4 1314.3 822.4 1314.3C825.4 1314.3 828.5 1316.8 831.5 1316.8C834.5 1316.8 837.5 1311.2 840.5 1309.2C843.6 1307.2 846.6 1306.0 849.6 1304.7C852.6 1303.3 855.6 1301.0 858.7 1301.0C861.7 1301.0 864.7 1301.0 867.7 1301.0C870.7 1301.0 873.8 1299.9 876.8 1299.5C879.8 1299.2 882.8 1298.8 885.8 1298.8C888.9 1298.8 891.9 1300.0 894.9 1300.0C897.9 1300.0 900.9 1299.3 904.0 1297.9C907.0 1296.6 910.0 1291.8 913.0 1290.2C916.1 1288.5 919.1 1289.3 922.1 1287.7C925.1 1286.1 928.1 1279.7 931.2 1276.2C934.2 1272.7 937.2 1268.9 940.2 1266.6C943.2 1264.3 946.3 1265.2 949.3 1262.5C952.3 1259.7 955.3 1244.6 958.3 1244.6C961.4 1244.6 964.4 1245.0 967.4 1245.0C970.4 1245.0 973.4 1243.4 976.5 1242.6C979.5 1241.7 982.5 1241.6 985.5 1239.9C988.5 1238.3 991.6 1237.5 994.6 1232.7C997.6 1228.0 1000.6 1213.6 1003.6 1199.9C1006.7 1186.3 1009.7 1159.6 1012.7 1150.7C1015.7 1141.8 1018.7 1137.4 1021.8 1137.4C1024.8 1137.4 1027.8 1142.5 1030.8 1142.5C1033.9 1142.5 1036.9 1128.9 1039.9 1124.1C1042.9 1119.3 1045.9 1119.5 1049.0 1113.8C1052.0 1108.2 1055.0 1093.7 1058.0 1090.2C1061.0 1086.8 1064.1 1086.4 1067.1 1085.1C1070.1 1083.8 1073.1 1082.7 1076.1 1082.4C1079.2 1082.2 1082.2 1082.0 1085.2 1082.0C1088.2 1082.0 1091.2 1084.1 1094.3 1084.7C1097.3 1085.3 1100.3 1085.7 1103.3 1085.7C1106.3 1085.7 1109.4 1082.5 1112.4 1081.0C1115.4 1079.5 1118.4 1078.4 1121.4 1076.9C1124.5 1075.4 1127.5 1073.8 1130.5 1072.2C1133.5 1070.6 1136.5 1068.5 1139.6 1067.3C1142.6 1066.0 1145.6 1064.6 1148.6 1064.6C1151.7 1064.6 1154.7 1082.4 1157.7 1082.6C1160.7 1082.9 1163.7 1083.1 1166.8 1083.1C1169.8 1083.1 1172.8 1079.0 1175.8 1079.0C1178.8 1079.0 1181.9 1081.9 1184.9 1083.7C1187.9 1085.5 1190.9 1087.9 1193.9 1089.6C1197.0 1091.3 1200.0 1092.3 1203.0 1093.9C1206.0 1095.6 1209.0 1097.8 1212.1 1099.5C1215.1 1101.1 1218.1 1103.8 1221.1 1103.8C1224.1 1103.8 1227.2 1099.9 1230.2 1096.4C1233.2 1092.8 1236.2 1083.9 1239.2 1082.4C1242.3 1080.9 1245.3 1080.8 1248.3 1080.2C1251.3 1079.6 1254.3 1079.4 1257.4 1079.0C1260.4 1078.5 1263.4 1077.3 1266.4 1077.3C1269.5 1077.3 1272.5 1077.7 1275.5 1078.1C1278.5 1078.6 1281.5 1080.2 1284.6 1080.2C1287.6 1080.2 1290.6 1078.5 1293.6 1078.5C1296.6 1078.5 1299.7 1085.3 1302.7 1085.3C1305.7 1085.3 1308.7 1083.7 1311.7 1083.7C1314.8 1083.7 1317.8 1086.8 1320.8 1086.8C1323.8 1086.8 1326.8 1082.6 1329.9 1082.6C1332.9 1082.6 1335.9 1082.6 1338.9 1082.6C1341.9 1082.6 1345.0 1083.3 1348.0 1084.3C1351.0 1085.3 1354.0 1088.8 1357.0 1088.8C1360.1 1088.8 1363.1 1088.4 1366.1 1088.2C1369.1 1087.9 1372.1 1087.4 1375.2 1087.4C1378.2 1087.4 1381.2 1088.1 1384.2 1088.6C1387.3 1089.1 1390.3 1089.8 1393.3 1090.2C1396.3 1090.7 1399.3 1090.6 1402.4 1091.3C1405.4 1091.9 1408.4 1094.3 1411.4 1095.8C1414.4 1097.2 1417.5 1097.1 1420.5 1099.9C1423.5 1102.6 1426.5 1109.5 1429.5 1113.4C1432.6 1117.3 1435.6 1119.8 1438.6 1123.0" fill="none" stroke="#1b74f0" stroke-width="3.5" stroke-linejoin="round" stroke-linecap="butt"/></svg>
<span class="t" style="left:523.5px;top:1103.0px;font-size:20.2px;letter-spacing:0.70px;color:#2f3343;">79.32M</span>
<span class="t" style="left:535.0px;top:1210.0px;font-size:20.2px;letter-spacing:0.80px;color:#2f3343;">79.3M</span>
<span class="t" style="left:522.2px;top:1317.0px;font-size:20.2px;letter-spacing:0.96px;color:#2f3343;">79.28M</span>
<span class="t" style="left:522.6px;top:1424.0px;font-size:20.2px;letter-spacing:0.88px;color:#2f3343;">79.26M</span>
<span class="t" style="left:726.9px;top:1503.0px;font-size:20.2px;letter-spacing:-0.18px;color:#2f3343;">Mar 17</span>
<span class="t" style="left:1000.8px;top:1503.0px;font-size:20.2px;letter-spacing:-0.05px;color:#2f3343;">Apr 16</span>
<span class="t" style="left:1268.6px;top:1503.0px;font-size:20.2px;letter-spacing:0.07px;color:#2f3343;">May 16</span>
<span class="t" style="left:421.2px;top:1263.0px;font-size:20px;letter-spacing:0.65px;color:#707070;transform:rotate(-90deg);transform-origin:50% 50%;">Number of followers</span>
<div class="a card" style="left:1501px;top:899.8px;width:1005.3px;height:662.5px;"></div>
<h2 class="t" style="left:1522.2px;top:925.0px;font-size:24px;letter-spacing:-0.06px;font-weight:700;">Followers growth trend</h2>
<svg class="a" style="left:1798.2px;top:921.3px" width="32" height="32" viewBox="1798.2 921.3 32 32" ><circle cx="1814.2" cy="937.3" r="13.3" fill="none" stroke="#1f2029" stroke-width="1.9"/><path d="M1809.8 933.9a4.5 4.5 0 1 1 6.6 4c-1.5.9-2.2 1.700-2.200 3.400" fill="none" stroke="#1f2029" stroke-width="1.9" stroke-linecap="round"/><circle cx="1814.2" cy="945.1" r="1.5" fill="#1f2029"/></svg>
<svg class="a" style="left:2446.3px;top:932.3px" width="30" height="10" viewBox="2446.3 932.3 30 10" ><g fill="#1f2029"><circle cx="2449.6" cy="937.3" r="3.2"/><circle cx="2459.6" cy="937.3" r="3.2"/><circle cx="2469.6" cy="937.3" r="3.2"/></g></svg>
<span class="t" style="left:1522.2px;top:981.0px;font-size:20.3px;letter-spacing:0.55px;color:#4a4b53;">Last 3 Months • Aggregated by day</span>
<div class="a badge" style="left:2335px;top:977.4px;width:150.6px;height:26.6px;"></div>
<span class="t" style="left:2340.5px;top:982.0px;font-size:18.4px;letter-spacing:-0.44px;font-weight:700;">PROFILE LEVEL</span>
<svg class="a" style="left:0;top:0" width="2546" height="1576" viewBox="0 0 2546 1576"><path d="M1636 1110.3H2467" stroke="#c5cecf" stroke-width="2" stroke-dasharray="2 7"/><path d="M1636 1198.3H2467" stroke="#c5cecf" stroke-width="2" stroke-dasharray="2 7"/><path d="M1636 1286H2467" stroke="#c5cecf" stroke-width="2" stroke-dasharray="2 7"/><path d="M1636 1373.7H2467" stroke="#c5cecf" stroke-width="2" stroke-dasharray="2 7"/><path d="M1636 1461.6H2467" stroke="#c5cecf" stroke-width="2" stroke-dasharray="2 7"/><path d="M1634.5 1480.4H2472M1786 1480.4V1494M2058 1480.4V1494M2330 1480.4V1494" stroke="#cfcfd1" stroke-width="1.8" fill="none"/><g fill="#1b74f0"><rect x="1637.0" y="1269.3" width="8" height="15.3" rx="4" ry="4.0"/><rect x="1646.1" y="1262.0" width="8" height="22.6" rx="4" ry="4.0"/><rect x="1655.1" y="1239.9" width="8" height="44.7" rx="4" ry="4.0"/><rect x="1664.2" y="1243.1" width="8" height="41.5" rx="4" ry="4.0"/><rect x="1673.3" y="1260.9" width="8" height="23.7" rx="4" ry="4.0"/><rect x="1682.3" y="1260.2" width="8" height="24.4" rx="4" ry="4.0"/><rect x="1691.4" y="1255.5" width="8" height="29.1" rx="4" ry="4.0"/><rect x="1700.5" y="1282.5" width="8" height="1.5" rx="0.8"/><rect x="1709.5" y="1277.8" width="8" height="6.8" rx="4" ry="3.4"/><rect x="1718.6" y="1253.8" width="8" height="30.8" rx="4" ry="4.0"/><rect x="1727.7" y="1157.6" width="8" height="127.0" rx="4" ry="4.0"/><rect x="1736.7" y="1247.6" width="8" height="37.0" rx="4" ry="4.0"/><rect x="1745.8" y="1278.8" width="8" height="5.8" rx="4" ry="2.9"/><rect x="1754.9" y="1270.5" width="8" height="14.1" rx="4" ry="4.0"/><rect x="1763.9" y="1274.1" width="8" height="10.5" rx="4" ry="4.0"/><rect x="1773.0" y="1270.8" width="8" height="13.8" rx="4" ry="4.0"/><rect x="1782.1" y="1277.6" width="8" height="7.0" rx="4" ry="3.5"/><rect x="1791.1" y="1284.6" width="8" height="33.5" rx="4" ry="4.0"/><rect x="1800.2" y="1255.8" width="8" height="28.8" rx="4" ry="4.0"/><rect x="1809.3" y="1273.7" width="8" height="10.9" rx="4" ry="4.0"/><rect x="1818.3" y="1282.5" width="8" height="1.5" rx="0.8"/><rect x="1827.4" y="1264.6" width="8" height="20.0" rx="4" ry="4.0"/><rect x="1836.5" y="1251.9" width="8" height="32.7" rx="4" ry="4.0"/><rect x="1845.5" y="1282.5" width="8" height="1.5" rx="0.8"/><rect x="1854.6" y="1284.6" width="8" height="10.0" rx="4" ry="4.0"/><rect x="1863.6" y="1262.1" width="8" height="22.5" rx="4" ry="4.0"/><rect x="1872.7" y="1271.6" width="8" height="13.0" rx="4" ry="4.0"/><rect x="1881.8" y="1274.7" width="8" height="9.9" rx="4" ry="4.0"/><rect x="1890.8" y="1285.2" width="8" height="1.3" rx="0.7"/><rect x="1899.9" y="1282.5" width="8" height="1.5" rx="0.8"/><rect x="1909.0" y="1282.7" width="8" height="1.3" rx="0.7"/><rect x="1918.0" y="1284.6" width="8" height="5.0" rx="4" ry="2.5"/><rect x="1927.1" y="1280.2" width="8" height="4.4" rx="4" ry="2.2"/><rect x="1936.2" y="1262.7" width="8" height="21.9" rx="4" ry="4.0"/><rect x="1945.2" y="1277.0" width="8" height="7.6" rx="4" ry="3.8"/><rect x="1954.3" y="1250.8" width="8" height="33.8" rx="4" ry="4.0"/><rect x="1963.4" y="1255.1" width="8" height="29.5" rx="4" ry="4.0"/><rect x="1972.4" y="1273.6" width="8" height="11.0" rx="4" ry="4.0"/><rect x="1981.5" y="1224.9" width="8" height="59.7" rx="4" ry="4.0"/><rect x="1990.6" y="1285.2" width="8" height="2.5" rx="1.0"/><rect x="1999.6" y="1278.9" width="8" height="5.7" rx="4" ry="2.9"/><rect x="2008.7" y="1277.8" width="8" height="6.8" rx="4" ry="3.4"/><rect x="2017.8" y="1267.6" width="8" height="17.0" rx="4" ry="4.0"/><rect x="2026.8" y="1182.1" width="8" height="102.5" rx="4" ry="4.0"/><rect x="2035.9" y="1124.3" width="8" height="160.3" rx="4" ry="4.0"/><rect x="2045.0" y="1235.6" width="8" height="49.0" rx="4" ry="4.0"/><rect x="2054.0" y="1284.6" width="8" height="17.5" rx="4" ry="4.0"/><rect x="2063.1" y="1231.0" width="8" height="53.6" rx="4" ry="4.0"/><rect x="2072.2" y="1251.9" width="8" height="32.7" rx="4" ry="4.0"/><rect x="2081.2" y="1210.3" width="8" height="74.3" rx="4" ry="4.0"/><rect x="2090.3" y="1267.6" width="8" height="17.0" rx="4" ry="4.0"/><rect x="2099.4" y="1275.4" width="8" height="9.2" rx="4" ry="4.0"/><rect x="2117.5" y="1284.6" width="8" height="10.6" rx="4" ry="4.0"/><rect x="2126.6" y="1284.6" width="8" height="5.9" rx="4" ry="3.0"/><rect x="2135.6" y="1272.2" width="8" height="12.4" rx="4" ry="4.0"/><rect x="2144.7" y="1272.6" width="8" height="12.0" rx="4" ry="4.0"/><rect x="2153.8" y="1270.6" width="8" height="14.0" rx="4" ry="4.0"/><rect x="2162.8" y="1269.4" width="8" height="15.2" rx="4" ry="4.0"/><rect x="2171.9" y="1278.3" width="8" height="6.3" rx="4" ry="3.1"/><rect x="2181.0" y="1284.6" width="8" height="61.4" rx="4" ry="4.0"/><rect x="2190.0" y="1285.2" width="8" height="2.5" rx="1.0"/><rect x="2199.1" y="1274.6" width="8" height="10.0" rx="4" ry="4.0"/><rect x="2208.2" y="1284.6" width="8" height="16.2" rx="4" ry="4.0"/><rect x="2217.2" y="1284.6" width="8" height="21.3" rx="4" ry="4.0"/><rect x="2226.3" y="1284.6" width="8" height="16.2" rx="4" ry="4.0"/><rect x="2235.4" y="1284.6" width="8" height="20.2" rx="4" ry="4.0"/><rect x="2244.4" y="1284.6" width="8" height="15.4" rx="4" ry="4.0"/><rect x="2253.5" y="1263.5" width="8" height="21.1" rx="4" ry="4.0"/><rect x="2262.5" y="1240.8" width="8" height="43.8" rx="4" ry="4.0"/><rect x="2271.6" y="1277.8" width="8" height="6.8" rx="4" ry="3.4"/><rect x="2280.7" y="1282.5" width="8" height="1.5" rx="0.8"/><rect x="2289.7" y="1281.5" width="8" height="2.5" rx="1.0"/><rect x="2298.8" y="1284.6" width="8" height="5.0" rx="4" ry="2.5"/><rect x="2307.9" y="1284.6" width="8" height="7.5" rx="4" ry="3.8"/><rect x="2316.9" y="1282.5" width="8" height="1.5" rx="0.8"/><rect x="2326.0" y="1284.6" width="8" height="21.7" rx="4" ry="4.0"/><rect x="2335.1" y="1281.5" width="8" height="2.5" rx="1.0"/><rect x="2344.1" y="1284.6" width="8" height="11.0" rx="4" ry="4.0"/><rect x="2353.2" y="1274.6" width="8" height="10.0" rx="4" ry="4.0"/><rect x="2362.3" y="1285.2" width="8" height="2.0" rx="1.0"/><rect x="2371.3" y="1284.6" width="8" height="7.5" rx="4" ry="3.8"/><rect x="2380.4" y="1284.6" width="8" height="15.0" rx="4" ry="4.0"/><rect x="2389.5" y="1282.7" width="8" height="1.3" rx="0.7" fill-opacity=".15"/><rect x="2398.5" y="1282.7" width="8" height="1.3" rx="0.7" fill-opacity=".15"/><rect x="2407.6" y="1284.6" width="8" height="5.9" rx="4" ry="3.0"/><rect x="2416.7" y="1284.6" width="8" height="8.0" rx="4" ry="4.0"/><rect x="2425.7" y="1284.6" width="8" height="5.5" rx="4" ry="2.8"/><rect x="2434.8" y="1284.6" width="8" height="16.2" rx="4" ry="4.0"/><rect x="2443.9" y="1284.6" width="8" height="15.4" rx="4" ry="4.0"/><rect x="2452.9" y="1284.6" width="8" height="43.5" rx="4" ry="4.0"/><rect x="2462.0" y="1284.6" width="8" height="38.0" rx="4" ry="4.0"/></g></svg>
<span class="t" style="left:1586.6px;top:1101.0px;font-size:20.2px;letter-spacing:-0.68px;color:#2f3343;">10K</span>
<span class="t" style="left:1597.7px;top:1189.0px;font-size:20.2px;letter-spacing:-1.23px;color:#2f3343;">5K</span>
<span class="t" style="left:1610.6px;top:1276.0px;font-size:20.2px;letter-spacing:0.10px;color:#2f3343;">0</span>
<span class="t" style="left:1588.0px;top:1364.0px;font-size:20.2px;letter-spacing:0.88px;color:#2f3343;">-5K</span>
<span class="t" style="left:1578.8px;top:1452.0px;font-size:20.2px;letter-spacing:-0.09px;color:#2f3343;">-10K</span>
<span class="t" style="left:1754.7px;top:1503.0px;font-size:20.2px;letter-spacing:-0.18px;color:#2f3343;">Mar 17</span>
<span class="t" style="left:2028.5px;top:1503.0px;font-size:20.2px;letter-spacing:-0.05px;color:#2f3343;">Apr 16</span>
<span class="t" style="left:2296.3px;top:1503.0px;font-size:20.2px;letter-spacing:0.07px;color:#2f3343;">May 16</span>
<span class="t" style="left:1464.2px;top:1277.0px;font-size:20px;letter-spacing:0.64px;color:#707070;transform:rotate(-90deg);transform-origin:50% 50%;">Followers growth</span>
</main>
</body>
</html>
